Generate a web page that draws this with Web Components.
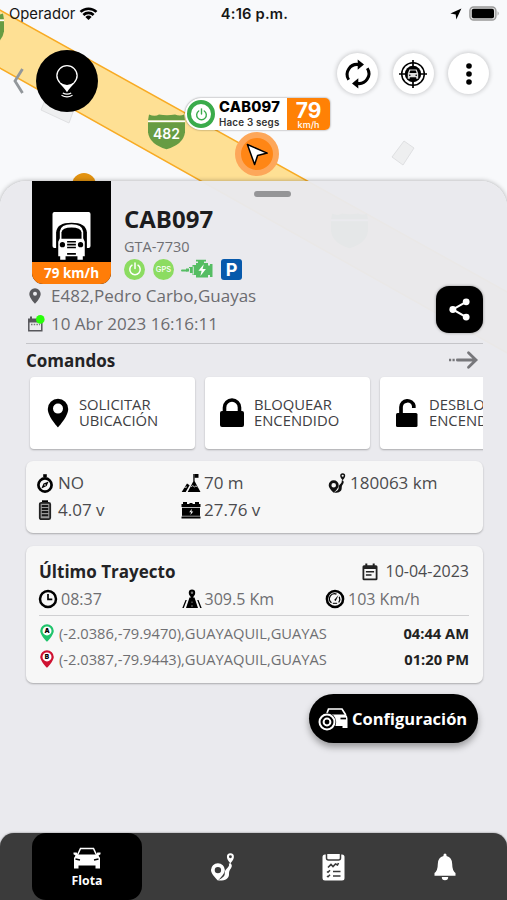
<!DOCTYPE html>
<html lang="es">
<head>
<meta charset="utf-8">
<title>Flota</title>
<style>
  html, body {
    margin: 0;
    width: 507px;
    height: 900px;
    overflow: hidden;
  }
</style>
</head>
<body>
<fleet-app></fleet-app>

<script>
'use strict';

// every icon is drawn at its natural size: [width, height, markup]
const icons = {
  wifi: [20, 14, `<g fill="none" stroke="#000" stroke-width="2.7"><path d="M1.6 5.2A12 12 0 0 1 18.4 5.2"/><path d="M4.6 8.4A7.7 7.7 0 0 1 15.4 8.4"/></g><path d="M10 13.8 6.7 10.4a4.8 4.8 0 0 1 6.6 0z"/>`],
  location: [12, 12, `<path d="M11.4.6.4 5.6l5.3.8.6 5z"/>`],
  battery: [31, 16, `<rect x=".9" y="1" width="26" height="13" rx="3.8" fill="#ddd" stroke="#999" stroke-width="1.4"/><rect x="2.8" y="2.8" width="22.2" height="9.4" rx="1.8"/><path d="M28.6 5.3q2.2 2.2 0 4.4z" fill="#999"/>`],
  back: [11, 26, `<path d="M9.5 1 2 13l7.500 12" fill="none" stroke="#92979b" stroke-width="2.800"/>`],
  beacon: [26, 36, `<path d="M13 2A10.800 10.800 0 0 0 2.200 12.800C2.200 19 8 21.500 13 29.300c5-7.800 10.800-10.300 10.800-16.500A10.800 10.800 0 0 0 13 2z" fill="#fff"/><circle cx="13" cy="12.600" r="9.400"/><g fill="none" stroke="#fff" stroke-width="1.200"><path d="M8.800 30q4.200 2.400 8.400 0"/><path d="M7.500 32.300q5.500 3.200 11 0"/></g>`],
  refresh: [24, 30, `<g fill="none" stroke="#000" stroke-width="3"><path d="M2.700 20.800A10 10 0 0 1 13 5.600"/><path d="M21.300 9.200A10 10 0 0 1 11 24.400"/></g><path d="m11.700.400 6.300 5.200-6.300 5.200zM12.300 19.200v10.400L6 24.400z"/>`],
  target: [30, 30, `<g fill="none" stroke="#000"><circle cx="15" cy="15" r="11.300" stroke-width="1.500"/><path d="M15 1v6M15 23v6M1 15h6M23 15h6" stroke-width="1.700"/></g><circle cx="15" cy="15" r="8.200"/><path d="M11.300 10.500h7.400l1.500 4v5.200h-2v-1.400h-6.400v1.400h-2v-5.200z" fill="#ddd"/><path d="m11.400 14 .9-2.500h5.400l.9 2.500z"/><circle cx="11.800" cy="16.200" r=".8"/><circle cx="18.200" cy="16.200" r=".8"/>`],
  more: [6, 22, `<circle cx="3" cy="3" r="2.800"/><circle cx="3" cy="11" r="2.800"/><circle cx="3" cy="19" r="2.800"/>`],
  power: [14, 14, `<g fill="none" stroke="currentColor" stroke-width="1.500" stroke-linecap="round"><path d="M4 3.200a5.200 5.200 0 1 0 6 0"/><path d="M7 .9v5.500"/></g>`],
  cursor: [24, 24, `<path d="m2.400 2.500 19.800 8.600-9.600 2.400-3 9z" fill="#fff" stroke="#000" stroke-width="1.500" stroke-linejoin="round"/>`],
  truck: [40, 52, `<rect x=".500" y="1" width="39" height="37" rx="2" fill="#fff"/><path d="M4.200 49V22Q5 12 20 12t15.800 10v27z"/><path d="M8.400 46.500h-2V31.500L8 28v-7q1-7.300 12-7.300T32 21v7l1.600 3.500v15h-2V50h-5.500v-3.500H13.900V50H8.400z" fill="#fff"/><path d="M9.700 28.500V22q.7-5.200 10.300-5.200T30.300 22v6.500z"/><circle cx="10.700" cy="34.500" r="2.700"/><circle cx="29.300" cy="34.500" r="2.700"/><path d="M15.500 31.500h9M15.500 34.500h9M15.500 37.500h9M15.500 44h9" stroke="#000" stroke-width="1.600"/>`],
  engine: [32, 20, `<path d="M1 11.500h5" stroke="#55bd63" stroke-width="2" stroke-linecap="round"/><path d="M5 9.500h3V8h3.500V6H15V4h2V2.500h-2V.700h10v1.800h-2V4h4v2.500h2V5h2.500v13H29v-2h-2v2.500H15V16h-3.500v-2H8v-1.500H5z" fill="#55bd63"/><path d="M8.500 9v5M12.300 7.500v8" stroke="#ececf0" stroke-width=".9"/><path d="m22.800 5.200-5.400 6.500h3.200l-1.200 5.300 5.500-7h-3.300z" fill="#fff"/>`],
  pin: [12, 16, `<path d="M6 .2A5.700 5.700 0 0 0 .3 6C.3 10 6 15.800 6 15.800S11.700 10 11.700 6A5.700 5.700 0 0 0 6 .2z" fill="#59595d"/><circle cx="6" cy="5.700" r="2" fill="#ececf0"/>`],
  calendarLive: [19, 18, `<path d="M1.800 5.200h13v10.600h-13z" fill="none" stroke="#57575b" stroke-width="1.500"/><path d="M1 3.500h12v4H1zM3 1.500h2v3H3z" fill="#57575b"/><path d="M4 9.500h9" stroke="#77777b" stroke-width="1.500" stroke-dasharray="1.500 1.200"/><circle cx="13.300" cy="4.400" r="4.300" fill="#28ff09"/>`],
  share: [22, 24, `<path d="M18 4 4 12l14 8" fill="none" stroke="#fff" stroke-width="2.200"/><g fill="#fff"><circle cx="18" cy="4" r="3.600"/><circle cx="4" cy="12" r="3.600"/><circle cx="18" cy="20" r="3.600"/></g>`],
  arrow: [30, 18, `<g fill="none" stroke="#77777b" stroke-width="2.800" stroke-linecap="round"><path d="M9.500 9H27M20.500 1.800 28 9l-7.500 7.200"/></g><path d="M1 9h7.500" stroke="#77777b" stroke-width="2.700" stroke-dasharray="2.200 1.300"/>`],
  place: [22, 30, `<path fill-rule="evenodd" d="M11 .7A10.200 10.200 0 0 0 .8 10.900C.8 18.500 11 29.300 11 29.300s10.200-10.800 10.200-18.400A10.200 10.200 0 0 0 11 .7zm0 4.900a5 5 0 1 1 0 10 5 5 0 0 1 0-10z"/>`],
  lock: [24, 30, `<rect y="13" width="24" height="16" rx="2"/><path d="M4.500 14V9.500a7.500 7.500 0 0 1 15 0V14" fill="none" stroke="#000" stroke-width="3.600"/>`],
  unlock: [22, 30, `<rect y="15" width="21.500" height="14" rx="1.500"/><path d="M5 16V9a6.500 6.500 0 0 1 12.800-1.300V10" fill="none" stroke="#000" stroke-width="3.700"/>`],
  compass: [18, 20, `<circle cx="9" cy="12" r="6.600" fill="none" stroke="#000" stroke-width="2.700"/><path d="M7.200 1.200h3.600v3H7.200z"/><path d="m12.600 8.500-2 4.600-5.200 2.400 2.100-4.900z"/><circle cx="9" cy="12" r=".8" fill="#fff"/>`],
  mountain: [20, 20, `<path d="m13 7 6.500 12H6.700zM6 10.500l2.600 1.800L4.700 19H.7zM12.300 1h1.300v7h-1.300z"/><path d="M13.500 1h4v3.800h-4z"/><path d="m9.800 13.800 2-1.200 1.500 1.300 1.700-1 1.300 1M3.500 14.500l2.500-.6" stroke="#f7f7f7" stroke-width=".8" fill="none"/>`],
  route: [18, 20, `<path fill-rule="evenodd" d="M5.700 7.300A5 5 0 0 0 .7 12.300c0 3.100 5 7.500 5 7.500s5-4.400 5-7.500a5 5 0 0 0-5-5zm0 2.700a2.300 2.300 0 1 1 0 4.600 2.300 2.300 0 0 1 0-4.600z" fill="currentColor"/><path d="M5.700 19.800c5 .4 8-1.300 8-4.500 0-2.800.9-3.400 1.600-4.700.7-1.300.5-2.300-.6-3.400l-1.200.6c.6 1 .2 1.600-.7 2.600-1.400 1.400-2.400 2.400-2.200 4.600.1 1.500-1 2.600-4.900 4.800z" fill="currentColor"/><path fill-rule="evenodd" d="M14.700.2a2.500 2.500 0 0 0-2.500 2.600c0 2 2.500 4.500 2.500 4.500s2.500-2.500 2.500-4.500A2.500 2.500 0 0 0 14.700.2zm0 1.500a1 1 0 1 1 0 2.100 1 1 0 0 1 0-2.100z" fill="currentColor"/>`],
  cell: [14, 20, `<path d="M4 .300h6v3H4z"/><rect x="1.800" y="2.800" width="10.400" height="16.400" rx="1.500" fill="#999" stroke="#222" stroke-width="1.800"/><path d="M3.800 6h6.400M3.800 9h6.400M3.800 12h6.400M3.800 15.200h6.400" stroke="#1a1a1a" stroke-width="2"/>`],
  carBattery: [20, 18, `<path d="M2 1h4v2h2.500V2h3v1H14V1h4v2h1.500v3H.5V3H2zM1 6.800h18v8.700h.5v2H.5v-2H1z"/><path d="m10.900 7.800-2.700 3.400h1.900l-.7 2.800 2.900-3.600h-1.900z" fill="#f7f7f7"/><path d="M.5 15.200h19" stroke="#f7f7f7" stroke-width=".6"/>`],
  calendar: [16, 18, `<path fill-rule="evenodd" d="M3.300.5h2v1.700h5.400V.5h2v1.700H14q1.500 0 1.500 1.500v12q0 1.500-1.500 1.500H2Q.5 17.200.5 15.700v-12q0-1.500 1.500-1.500h1.300zM2.300 6v9.400h11.400V6z" fill="#222"/><path d="M3.900 8.800h8.200M3.900 12h5.600" stroke="#222" stroke-width="1.600"/>`],
  clock: [20, 20, `<circle cx="10" cy="10" r="8" fill="none" stroke="#000" stroke-width="2.500"/><path d="M10 5v5.300h4.300" fill="none" stroke="#000" stroke-width="1.700"/>`],
  road: [20, 20, `<path d="M7.500 8.500h5L16 19H4zM3.500 11h1.300L1.800 19H.3zM15.200 11h1.300l3.200 8h-1.500z"/><circle cx="10" cy="3.800" r="3.200"/><path d="m7.300 5.500 2.700 5 2.700-5z"/><circle cx="10" cy="3.700" r="1.200" fill="#777"/><path d="M10 12.500v1.500M10 16v2" stroke="#999" stroke-width=".8"/>`],
  gauge: [20, 20, `<circle cx="10" cy="10" r="8.100" fill="none" stroke="#000" stroke-width="2.500"/><path d="M6.500 13.800A5 5 0 0 1 11.500 5.200M14.300 7.800q1.300 3-.6 5.700" fill="none" stroke="#000" stroke-width="1.300"/><path d="m13.500 6-4.300 5 1.500 1z"/><path d="M7.800 14.300h4.400" stroke="#000"/>`],
  wheelCar: [30, 24, `<path d="M8.500 7.500 10.500 2h13.500l3.800 6" fill="none" stroke="#fff" stroke-width="1.700"/><path d="M8 7.500h19.500q2 1 2 4v9.500h-5v-2H17q0-9.500-9-11.500z" fill="#fff"/><path d="M22.500 11.500H28" stroke="#000" stroke-width="1.700"/><circle cx="9" cy="15" r="9.200"/><circle cx="9" cy="15" r="7.500" fill="none" stroke="#fff" stroke-width="2"/><circle cx="9" cy="15" r="3.400" fill="none" stroke="#fff" stroke-width="2"/>`],
  car: [28, 22, `<path d="m4.500 8 3-6.500h13l3 6.500" fill="none" stroke="#fff" stroke-width="1.500"/><path d="M.5 5.500h3.200l1 2h18.600l1-2h3.200v1.700l-2 1.300L27 11v10.500h-4.500v-3h-17v3H1V11l1.500-2.500-2-1.300z" fill="#fff"/><path d="m2.500 12 4.500 1M25.500 12l-4.500 1" stroke="#000" stroke-width="1.400"/>`],
  clipboard: [23, 29, `<rect x=".5" y="2.500" width="22" height="26" rx="2.500" fill="#fff"/><path d="M4.500 1.200h14V6q0 2-2 2h-10q-2 0-2-2z" fill="#fff" stroke="#3b3b3b" stroke-width="1.500"/><g fill="none" stroke="#3b3b3b" stroke-width="1.600"><path d="m6 15.500 3-3 2 2 2.500-2.500 2 1 1-2M11 19.500h7.500M11 24h7.500"/><path d="m5 19.500 1 .8 2-2M5 24l1 .8 2-2"/></g>`],
  bell: [22, 28, `<path d="M9.500 2a1.500 1.500 0 0 1 3 0v1q5.700 1.500 5.700 8 0 6.500 3.300 9v2.700H.5V20q3.300-2.500 3.300-9 0-6.500 5.700-8zM7.800 24h6.400a3.200 3.200 0 0 1-6.400 0z" fill="#fff"/>`]
};

// attaches an open shadow tree filled from a template
class BaseElement extends HTMLElement {
  connectedCallback() {
    if (this.shadowRoot) return;
    const template = document.createElement('template');
    template.innerHTML = this.render();
    this.attachShadow({ mode: 'open' }).appendChild(template.content.cloneNode(true));
  }
  attr(name) {
    return this.getAttribute(name) || '';
  }
}

class AppIcon extends BaseElement {
  render() {
    const [w, h, body] = icons[this.attr('name')];
    const size = Number(this.attr('width')) || w;
    return `
      <style>
        :host { display: inline-flex; flex: none; }
        svg { display: block; flex: none; overflow: visible; }
      </style>
      <svg width="${size}" height="${size * h / w}" viewBox="0 0 ${w} ${h}">${body}</svg>
    `;
  }
}

class StatusBar extends BaseElement {
  render() {
    return `
      <style>
        :host {
          display: grid;
          grid-template-columns: 1fr auto 1fr;
          align-items: center;
          height: 27px;
          padding: 0 7px 0 9px;
          font: 400 14.8px/27px Inter, sans-serif;
          color: #161616;
        }
        .side { display: flex; align-items: center; gap: 4px; }
        .end { justify-content: flex-end; gap: 7px; }
        .time { padding-top: 1px; font-weight: 600; font-size: 14.7px; letter-spacing: .2px; }
      </style>
      <div class="side">Operador <app-icon name="wifi" width="19"></app-icon></div>
      <div class="time">4:16 p.m.</div>
      <div class="side end"><app-icon name="location"></app-icon><app-icon name="battery"></app-icon></div>
    `;
  }
}

class RoundButton extends BaseElement {
  render() {
    return `
      <style>
        :host {
          display: flex;
          align-items: center;
          justify-content: center;
          width: 41px;
          height: 41px;
          border-radius: 50%;
          background: #fff;
          box-shadow: 0 0 4px 1px rgba(0, 0, 0, .18);
        }
        :host([dark]) { width: 62px; height: 62px; background: #000; box-shadow: none; }
      </style>
      <slot></slot>
    `;
  }
}

class MapToolbar extends BaseElement {
  render() {
    return `
      <style>
        :host { display: flex; justify-content: space-between; padding: 23px 18px 0 13px; }
        .left { display: flex; align-items: center; gap: 12px; }
        .right { display: flex; gap: 14.5px; padding-top: 3px; }
      </style>
      <div class="left">
        <app-icon name="back"></app-icon>
        <round-button dark><app-icon name="beacon"></app-icon></round-button>
      </div>
      <div class="right">
        <round-button><app-icon name="refresh"></app-icon></round-button>
        <round-button><app-icon name="target"></app-icon></round-button>
        <round-button><app-icon name="more"></app-icon></round-button>
      </div>
    `;
  }
}

class VehicleMarker extends BaseElement {
  render() {
    return `
      <style>
        :host {
          display: flex;
          width: 145px;
          height: 32px;
          border-radius: 16px 5px 5px 16px;
          background: #fff;
          overflow: hidden;
          font-family: Inter, sans-serif;
          box-shadow: 0 0 2px rgba(0, 0, 0, .5);
        }
        .power {
          display: flex;
          align-items: center;
          justify-content: center;
          box-sizing: border-box;
          width: 28px;
          height: 28px;
          margin: 2px 4px 0 2px;
          border: 4.5px solid #3aab4b;
          border-radius: 50%;
          color: #3aab4b;
        }
        .name { flex: 1; white-space: nowrap; color: #000; }
        .name b { display: block; font: 800 14.7px/19px Inter, sans-serif; letter-spacing: .2px; }
        .name span { display: block; font: 600 9.8px/12px Inter, sans-serif; color: #333; letter-spacing: .2px; }
        .speed { width: 43px; background: #ff8105; color: #fff; text-align: center; }
        .speed b { display: block; font: 700 21px/25px Inter, sans-serif; }
        .speed span { display: block; margin-top: -3px; font: 500 9px/10px Inter, sans-serif; }
      </style>
      <div class="power"><app-icon name="power" width="13"></app-icon></div>
      <div class="name"><b>CAB097</b><span>Hace 3 segs</span></div>
      <div class="speed"><b>79</b><span>km/h</span></div>
    `;
  }
}

class MapView extends BaseElement {
  render() {
    return `
      <style>
        :host { display: block; position: absolute; inset: 0; background: #f8f9fb; }
        svg { display: block; }
        vehicle-marker { position: absolute; left: 185px; top: 98px; }
        .cursor {
          position: absolute;
          left: 235px;
          top: 132px;
          display: flex;
          align-items: center;
          justify-content: center;
          box-sizing: border-box;
          width: 44px;
          height: 44px;
          border: 6px solid #fda75a;
          border-radius: 50%;
          background: #ff8615;
        }
      </style>
      <svg width="507" height="900" viewBox="0 0 507 900">
        <path d="m45 100 28 12-4 11-28-13zM404 141l10 7-11 17-11-8z" fill="#eeeff0" stroke="#dfe0e2"/>
        <path d="M-2 9 509 293v61L-2 67z" fill="#fee094"/>
        <path d="M-2 9 509 293M-2 67 509 354" fill="none" stroke="#f8ab24" stroke-width="1.500"/>
        <g id="shield">
          <path d="M149 114.500q6 2.500 10 0 8 1.500 16 0 5 2 9 0l1 6h-37z" fill="#679c43"/>
          <path d="M148 120.500h37v1.800h-37z" fill="#fff"/>
          <path d="M148 122.300h37v10q-1.500 12-18.500 17-17-5-18.500-17z" fill="#679c43"/>
        </g>
        <use href="#shield" x="-181" y="-101"/>
        <use href="#shield" x="183" y="99"/>
        <text x="166.500" y="139" text-anchor="middle" fill="#fff" font-family="Inter, sans-serif" font-size="14" font-weight="600">482</text>
        <circle cx="84" cy="185" r="12" fill="#e39310"/>
      </svg>
      <div class="cursor"><app-icon name="cursor"></app-icon></div>
      <vehicle-marker></vehicle-marker>
    `;
  }
}

class VehicleHeader extends BaseElement {
  render() {
    return `
      <style>
        :host { display: flex; gap: 13px; height: 103px; padding-left: 6px; }
        .badge {
          display: flex;
          flex-direction: column;
          width: 79px;
          overflow: hidden;
          border-radius: 0 0 11px 11px;
          background: #000;
        }
        .badge app-icon { flex: 1; align-items: flex-end; justify-content: center; }
        .badge span {
          background: #ff7d08;
          color: #fff;
          text-align: center;
          font-weight: 700;
          font-size: 13.5px;
          line-height: 21px;
          padding-top: 1px;
        }
        .info { padding-top: 21px; }
        h1 { margin: 0 0 1px; font-size: 24px; line-height: 34px; color: #1c1c1e; }
        .plate { font-size: 14.5px; line-height: 20px; color: #6f6f73; }
        .flags { display: flex; align-items: center; height: 24px; }
        .dot {
          display: flex;
          align-items: center;
          justify-content: center;
          width: 21px;
          height: 21px;
          border-radius: 50%;
          background: #8cdc61;
          color: #fff;
          margin-right: 8px;
        }
        .gps { font: 500 7.5px Inter, sans-serif; }
        .flags app-icon[name=engine] { margin-left: -1px; }
        .park {
          width: 21px;
          height: 21px;
          margin-left: 8px;
          border-radius: 3px;
          background: #0759ab;
          color: #fff;
          text-align: center;
          font: 700 18px/21px Inter, sans-serif;
        }
      </style>
      <div class="badge"><app-icon name="truck" width="39"></app-icon><span>79 km/h</span></div>
      <div class="info">
        <h1>CAB097</h1>
        <div class="plate">GTA-7730</div>
        <div class="flags">
          <div class="dot"><app-icon name="power"></app-icon></div>
          <div class="dot gps">GPS</div>
          <app-icon name="engine"></app-icon>
          <div class="park">P</div>
        </div>
      </div>
    `;
  }
}

class VehicleLocation extends BaseElement {
  render() {
    return `
      <style>
        :host {
          display: flex;
          justify-content: space-between;
          height: 59px;
          border-bottom: 1px solid #c5c5c9;
          font-size: 17px;
          line-height: 24px;
          color: #6c6c70;
        }
        .row { display: flex; align-items: center; height: 24px; margin-bottom: 4px; }
        .row app-icon { width: 23px; padding-left: 1px; box-sizing: border-box; }
        .row app-icon[name=pin] { padding-left: 3px; }
        .row span { padding-left: 2px; }
        .share {
          display: flex;
          align-items: center;
          justify-content: center;
          width: 47px;
          height: 47px;
          margin-top: 2px;
          border-radius: 13px;
          background: #000;
          box-shadow: 0 0 3px rgba(0, 0, 0, .4);
        }
      </style>
      <div>
        <div class="row"><app-icon name="pin"></app-icon><span>E482,Pedro Carbo,Guayas</span></div>
        <div class="row"><app-icon name="calendarLive"></app-icon><span>10 Abr 2023 16:16:11</span></div>
      </div>
      <div class="share"><app-icon name="share" width="21"></app-icon></div>
    `;
  }
}

class CommandCard extends BaseElement {
  render() {
    return `
      <style>
        :host {
          display: flex;
          flex: none;
          align-items: center;
          box-sizing: border-box;
          width: 165px;
          height: 72px;
          padding-left: 15px;
          border-radius: 4px;
          background: #fff;
          box-shadow: 0 1px 2px rgba(0, 0, 0, .28);
          font-size: 14.8px;
          line-height: 16px;
          color: #404043;
        }
        app-icon { width: 34px; }
        app-icon[name=place] { padding-left: 2px; width: 32px; }
        app-icon[name=unlock] { padding-left: 1px; width: 33px; }
        .label { padding-bottom: 2px; }
      </style>
      <app-icon name="${this.attr('icon')}"></app-icon>
      <div class="label"><slot></slot></div>
    `;
  }
}

class CommandList extends BaseElement {
  render() {
    return `
      <style>
        :host { display: block; }
        header {
          display: flex;
          align-items: center;
          justify-content: space-between;
          height: 32px;
          padding-right: 5px;
          font-size: 17px;
          font-weight: 700;
          color: #232325;
        }
        .cards { display: flex; gap: 10px; overflow: hidden; padding: 1px 0 3px 4px; }
      </style>
      <header>Comandos <app-icon name="arrow"></app-icon></header>
      <div class="cards">
        <command-card icon="place">SOLICITAR<br>UBICACIÓN</command-card>
        <command-card icon="lock">BLOQUEAR<br>ENCENDIDO</command-card>
        <command-card icon="unlock">DESBLOQUEAR<br>ENCENDIDO</command-card>
      </div>
    `;
  }
}

class InfoItem extends BaseElement {
  render() {
    return `
      <style>
        :host { display: flex; align-items: center; height: 27px; white-space: nowrap; }
        .icon { display: flex; justify-content: center; width: 20px; margin-right: var(--icon-gap, 2px); color: #111; }
      </style>
      <div class="icon"><app-icon name="${this.attr('icon')}"></app-icon></div>
      <slot></slot>
    `;
  }
}

class InfoPanel extends BaseElement {
  render() {
    return `
      <style>
        :host {
          display: block;
          box-sizing: border-box;
          border-radius: 7px;
          background: #f7f7f7;
          box-shadow: 0 1px 2px rgba(0, 0, 0, .28);
        }
      </style>
      <slot></slot>
    `;
  }
}

class SensorPanel extends BaseElement {
  render() {
    return `
      <style>
        :host { display: block; margin-top: 9px; }
        info-panel { height: 72px; padding: 8px 0 0 9px; }
        .grid {
          display: grid;
          grid-template-columns: 146px 146px 1fr;
          font-size: 17px;
          line-height: 27px;
          color: #4b4b4e;
        }
        info-item { --icon-gap: 3px; }
      </style>
      <info-panel>
        <div class="grid">
          <info-item icon="compass">NO</info-item>
          <info-item icon="mountain">70 m</info-item>
          <info-item icon="route">180063 km</info-item>
          <info-item icon="cell">4.07 v</info-item>
          <info-item icon="carBattery">27.76 v</info-item>
        </div>
      </info-panel>
    `;
  }
}

class TripStop extends BaseElement {
  render() {
    const color = this.attr('color');
    return `
      <style>
        :host {
          display: flex;
          align-items: center;
          height: 26px;
          font-size: 14.7px;
          color: #6f6f72;
          white-space: nowrap;
        }
        svg { width: 16px; height: 18px; margin-right: 4px; }
        b { margin-left: auto; color: #222; }
      </style>
      <svg viewBox="0 0 16 18">
        <path d="M8 .3A6.800 6.800 0 0 0 1.200 7C1.200 11 8 17.800 8 17.800S14.800 11 14.800 7A6.800 6.800 0 0 0 8 .3z" fill="${color}"/>
        <circle cx="8" cy="6.900" r="4.500" fill="#fff"/>
        <text x="8" y="9.300" text-anchor="middle" font-family="Inter, sans-serif" font-size="6.500" font-weight="900">${this.attr('label')}</text>
      </svg>
      <slot></slot>
      <b>${this.attr('time')}</b>
    `;
  }
}

class TripPanel extends BaseElement {
  render() {
    return `
      <style>
        :host { display: block; margin-top: 13px; }
        info-panel { height: 137px; padding: 12px 14px 0 13px; }
        header { display: flex; justify-content: space-between; height: 27px; line-height: 27px; }
        h2 { margin: 0; font-size: 17px; color: #232325; }
        .date { --icon-gap: 6px; font-size: 16px; color: #4b4b4e; }
        .grid {
          display: grid;
          grid-template-columns: 143.500px 143.500px 1fr;
          margin-left: -1px;
          font-size: 16px;
          color: #6f6f72;
          padding-bottom: 3px;
          --icon-gap: 3px;
        }
        .stops { border-top: 1px solid #d0d0d2; padding-top: 4px; }
      </style>
      <info-panel>
        <header><h2>Último Trayecto</h2><info-item class="date" icon="calendar">10-04-2023</info-item></header>
        <div class="grid">
          <info-item icon="clock">08:37</info-item>
          <info-item icon="road">309.5 Km</info-item>
          <info-item icon="gauge">103 Km/h</info-item>
        </div>
        <div class="stops">
          <trip-stop label="A" color="#20c46c" time="04:44 AM">(-2.0386,-79.9470),GUAYAQUIL,GUAYAS</trip-stop>
          <trip-stop label="B" color="#cf1232" time="01:20 PM">(-2.0387,-79.9443),GUAYAQUIL,GUAYAS</trip-stop>
        </div>
      </info-panel>
    `;
  }
}

class PillButton extends BaseElement {
  render() {
    return `
      <style>
        :host {
          display: flex;
          align-items: center;
          box-sizing: border-box;
          width: 169px;
          height: 49px;
          padding-left: 9px;
          gap: 4px;
          border-radius: 25px;
          background: #000;
          color: #fff;
          font-size: 16.5px;
          font-weight: 700;
          box-shadow: 0 4px 7px rgba(0, 0, 0, .35);
        }
      </style>
      <app-icon name="wheelCar"></app-icon>
      <slot></slot>
    `;
  }
}

class VehicleSheet extends BaseElement {
  render() {
    return `
      <style>
        :host {
          display: block;
          position: relative;
          flex: 1;
          margin-top: 69px;
          padding: 0 24px 0 26px;
          border-radius: 26px 26px 0 0;
          background: rgba(233, 233, 237, .97);
          box-shadow: 0 0 5px rgba(0, 0, 0, .32);
        }
        .handle {
          position: absolute;
          left: 254px;
          top: 10px;
          width: 37px;
          height: 6px;
          border-radius: 3px;
          background: #959597;
        }
        pill-button { margin: 11px 5px 0 auto; }
      </style>
      <div class="handle"></div>
      <vehicle-header></vehicle-header>
      <vehicle-location></vehicle-location>
      <command-list></command-list>
      <sensor-panel></sensor-panel>
      <trip-panel></trip-panel>
      <pill-button>Configuración</pill-button>
    `;
  }
}

class NavItem extends BaseElement {
  render() {
    return `
      <style>
        :host {
          display: flex;
          flex-direction: column;
          align-items: center;
          justify-content: center;
          width: 111px;
          color: #fff;
          font-size: 12.3px;
          font-weight: 700;
          line-height: 17px;
        }
        :host([active]) {
          width: 110px;
          margin-right: 25px;
          gap: 3px;
          padding-top: 2px;
          box-sizing: border-box;
          border-radius: 14px;
          background: #000;
        }
      </style>
      <app-icon name="${this.attr('icon')}" width="${this.attr('width')}"></app-icon>
      <slot></slot>
    `;
  }
}

class NavBar extends BaseElement {
  render() {
    return `
      <style>
        :host {
          display: flex;
          height: 67px;
          padding-left: 32px;
          border-radius: 14px 14px 0 0;
          background: #3b3b3b;
          box-shadow: 0 0 2px rgba(0, 0, 0, .5);
        }
      </style>
      <nav-item active icon="car">Flota</nav-item>
      <nav-item icon="route" width="25"></nav-item>
      <nav-item icon="clipboard"></nav-item>
      <nav-item icon="bell"></nav-item>
    `;
  }
}

class FleetApp extends BaseElement {
  render() {
    return `
      <style>
        :host {
          display: flex;
          flex-direction: column;
          position: relative;
          width: 507px;
          height: 900px;
          overflow: hidden;
          font-family: "Open Sans", "Noto Sans", sans-serif;
        }
        .screen { display: flex; flex-direction: column; flex: 1; position: relative; }
        /* same colour as the sheet, seen in the rounded corners of the bar */
        .foot { background: #e9e9ed; position: relative; }
      </style>
      <map-view></map-view>
      <div class="screen">
        <status-bar></status-bar>
        <map-toolbar></map-toolbar>
        <vehicle-sheet></vehicle-sheet>
      </div>
      <div class="foot"><nav-bar></nav-bar></div>
    `;
  }
}

customElements.define('app-icon', AppIcon);
customElements.define('status-bar', StatusBar);
customElements.define('round-button', RoundButton);
customElements.define('map-toolbar', MapToolbar);
customElements.define('vehicle-marker', VehicleMarker);
customElements.define('map-view', MapView);
customElements.define('vehicle-header', VehicleHeader);
customElements.define('vehicle-location', VehicleLocation);
customElements.define('command-card', CommandCard);
customElements.define('command-list', CommandList);
customElements.define('info-item', InfoItem);
customElements.define('info-panel', InfoPanel);
customElements.define('sensor-panel', SensorPanel);
customElements.define('trip-stop', TripStop);
customElements.define('trip-panel', TripPanel);
customElements.define('pill-button', PillButton);
customElements.define('vehicle-sheet', VehicleSheet);
customElements.define('nav-item', NavItem);
customElements.define('nav-bar', NavBar);
customElements.define('fleet-app', FleetApp);
</script>
</body>
</html>
